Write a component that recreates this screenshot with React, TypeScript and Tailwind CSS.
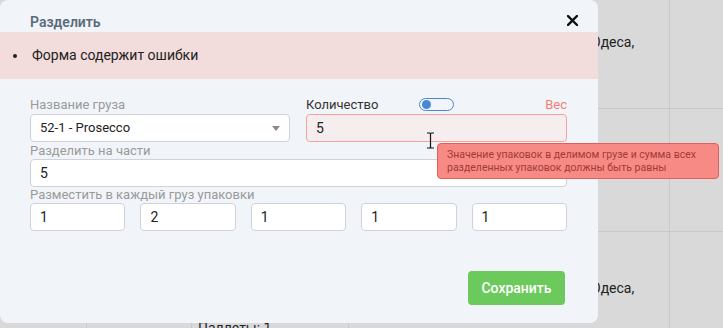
import React from 'react';

const parts = ['1', '2', '1', '1', '1'];

const Field: React.FC<{ value: string; className?: string }> = ({ value, className }) => (
    <div className={`h-[28px] flex items-center px-[9px] rounded-[4px] border text-[14px] text-[#222] ${className ?? 'bg-white border-[#cfd3d9]'}`}>
        {value}
    </div>
);

const App: React.FC = () => {
    return (
        <div className="relative w-[723px] h-[328px] overflow-hidden bg-[#d9d9d9] font-['Roboto',sans-serif]">
            {/* table behind the modal */}
            <div className="flex flex-col text-[14px] text-[#222]">
                <div className="h-[109px] flex border-b border-[#c9c9c9]">
                    <div className="w-[670px] border-r border-[#c9c9c9] pl-[591px] pt-[32px]">Одеса,</div>
                    <div className="flex-1" />
                </div>
                <div className="h-[123px] flex border-b border-[#c9c9c9]">
                    <div className="w-[670px] border-r border-[#c9c9c9]" />
                    <div className="flex-1" />
                </div>
                <div className="h-[100px] flex">
                    <div className="w-[87px] border-r border-[#c9c9c9]" />
                    <div className="w-[105px] border-r border-[#c9c9c9]" />
                    <div className="w-[157px] border-r border-[#c9c9c9] pl-[6px] pt-[86px]">Паллеты: 1</div>
                    <div className="w-[321px] border-r border-[#c9c9c9] pl-[242px] pt-[46px]">Одеса,</div>
                    <div className="flex-1" />
                </div>
            </div>

            {/* modal */}
            <div className="absolute left-0 top-0 w-[598px] h-[323px] rounded-[8px] bg-[#f1f5f9] flex flex-col">
                <div className="h-[32px] pt-[13px] pl-[30px] pr-[20px] flex items-start justify-between">
                    <div className="text-[14px] leading-[18px] font-semibold text-[#5b6b7b]">Разделить</div>
                    <svg width="11" height="11" viewBox="0 0 11 11" className="mt-[2px]">
                        <path d="M1 1L10 10M10 1L1 10" stroke="#111" strokeWidth="2.4" strokeLinecap="square" />
                    </svg>
                </div>

                <div className="h-[47px] bg-[#f2dcdc] flex items-center">
                    <span className="ml-[13px] w-[4px] h-[4px] rounded-full bg-[#222]" />
                    <span className="ml-[15px] text-[14px] text-[#222]">Форма содержит ошибки</span>
                </div>

                <div className="pl-[30px] pr-[31px] pt-[16px] flex flex-col">
                    <div className="flex gap-[16px]">
                        <div className="w-[260px] flex flex-col">
                            <div className="h-[19px] leading-[19px] text-[13px] text-[#9a9a9a]">Название груза</div>
                            <div className="h-[28px] flex items-center justify-between pl-[9px] pr-[9px] rounded-[4px] border border-[#cfd3d9] bg-white text-[13px] text-[#222]">
                                <span>52-1 - Prosecco</span>
                                <svg width="8" height="5" viewBox="0 0 8 5">
                                    <path d="M0 0H8L4 5Z" fill="#8a8a8a" />
                                </svg>
                            </div>
                        </div>
                        <div className="flex-1 flex flex-col">
                            <div className="h-[19px] grid grid-cols-[1fr_auto_1fr] items-center text-[13px]">
                                <span className="text-[#333]">Количество</span>
                                <span className="w-[35px] h-[13px] rounded-full border-[1.5px] border-[#4a86d8] flex items-center pl-[2px]">
                                    <span className="w-[9px] h-[9px] rounded-full bg-[#4a86d8]" />
                                </span>
                                <span className="justify-self-end text-[#f07f72]">Вес</span>
                            </div>
                            <Field value="5" className="bg-[#f6eeee] border-[#f3a29c]" />
                        </div>
                    </div>

                    <div className="h-[17px] leading-[17px] text-[13px] text-[#9a9a9a]">Разделить на части</div>
                    <Field value="5" />

                    <div className="h-[16px] leading-[16px] text-[13px] text-[#9a9a9a]">Разместить в каждый груз упаковки</div>
                    <div className="grid grid-cols-5 gap-[15px]">
                        {parts.map((p, i) => (
                            <Field key={i} value={p} />
                        ))}
                    </div>

                    <div className="flex justify-end pt-[40px] pr-[2px]">
                        <button className="h-[34px] w-[97px] rounded-[4px] bg-[#6cc95c] text-white text-[14px] font-medium">
                            Сохранить
                        </button>
                    </div>
                </div>
            </div>

            {/* text cursor */}
            <svg width="9" height="17" viewBox="0 0 9 17" className="absolute left-[426px] top-[132px]">
                <path d="M1 1H3.5C4 1 4.5 1.5 4.5 2V15C4.5 15.5 5 16 5.5 16H8M8 1H5.5C5 1 4.5 1.5 4.5 2M4.5 15C4.5 15.5 4 16 3.5 16H1" stroke="#111" strokeWidth="1.2" fill="none" />
            </svg>

            {/* validation tooltip */}
            <div className="absolute left-[437px] top-[143px] w-[282px] h-[36px] rounded-[4px] border border-[#e35e5a] bg-[#f88a85] px-[9px] pt-[4px] text-[10.5px] leading-[13px] text-[#a33a36] whitespace-nowrap">
                Значение упаковок в делимом грузе и сумма всех
                <br />
                разделенных упаковок должны быть равны
            </div>
        </div>
    );
};

export default App;
